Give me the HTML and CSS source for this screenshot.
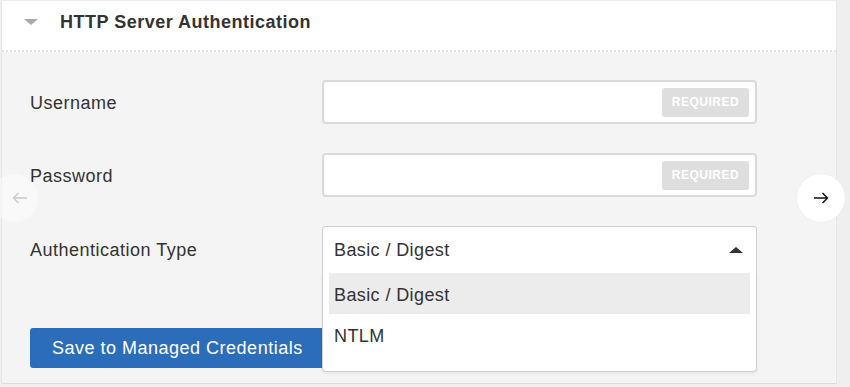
FILE: index.html
```html
<!DOCTYPE html>
<html lang="en">
<head>
    <meta charset="UTF-8">
    <meta name="viewport" content="width=device-width, initial-scale=1.0">
    <title>HTTP Server Authentication</title>
    <link rel="stylesheet" href="styles.css">
</head>
<body>
    <div class="panel">
        <div class="panel-header">
            <span class="toggle"></span>
            <h2>HTTP Server Authentication</h2>
        </div>

        <div class="panel-body">
            <div class="form">
                <label for="username">Username</label>
                <div class="field">
                    <input id="username" type="text">
                    <span class="badge">REQUIRED</span>
                </div>

                <label for="password">Password</label>
                <div class="field">
                    <input id="password" type="password">
                    <span class="badge">REQUIRED</span>
                </div>

                <label>Authentication Type</label>
                <div class="select-wrap">
                    <div class="select">
                        <span>Basic / Digest</span>
                        <span class="caret"></span>
                    </div>
                    <ul class="menu">
                        <li class="active">Basic / Digest</li>
                        <li>NTLM</li>
                    </ul>
                </div>
            </div>

            <div class="actions">
                <button class="btn-primary">Save to Managed Credentials</button>
            </div>
        </div>
    </div>

    <!-- flechas del carrusel -->
    <button class="nav nav-prev">
        <svg width="16" height="12" viewBox="0 0 16 12"><path d="M15 6H1.5M6.5 1L1.5 6l5 5" fill="none" stroke="currentColor" stroke-width="1.3"/></svg>
    </button>
    <button class="nav nav-next">
        <svg width="16" height="12" viewBox="0 0 16 12"><path d="M1 6h13.5M9.5 1l5 5-5 5" fill="none" stroke="currentColor" stroke-width="1.5"/></svg>
    </button>
</body>
</html>
```

FILE: styles.css
```css
body {
    margin: 0;
    background-color: #efefef;
    font-family: "Liberation Sans", Arial, sans-serif;
    color: #333;
    overflow: hidden;
}

.panel {
    width: 834px;
    margin-left: 1px;
    border-left: 1px solid #e6e6e6;
    border-right: 1px solid #e6e6e6;
    border-bottom: 1px solid #dcdcdc;
}

.panel-header {
    display: flex;
    align-items: center;
    height: 52px;
    padding-bottom: 7px;
    background-color: #fff;
    border-top: 1px solid #ececec;
    border-bottom: 2px dotted #e2e2e2;
    box-sizing: border-box;
}

.toggle {
    width: 0;
    height: 0;
    margin-left: 22px;
    border-left: 7px solid transparent;
    border-right: 7px solid transparent;
    border-top: 6px solid #aaa;
}

.panel-header h2 {
    margin: 0 0 0 22px;
    font-size: 18px;
    font-weight: bold;
    letter-spacing: 0.5px;
    color: #333;
}

.panel-body {
    background-color: #f4f4f4;
    padding: 28px 0 15px 28px;
}

.form {
    display: grid;
    grid-template-columns: 292px 435px;
    row-gap: 29px;
    align-items: center;
}

.form label {
    padding-top: 3px;
    font-size: 18px;
    letter-spacing: 0.5px;
}

.field {
    display: flex;
    align-items: center;
    height: 44px;
    padding-right: 6px;
    background-color: #fff;
    border: 2px solid #dadada;
    border-radius: 4px;
    box-sizing: border-box;
}

.field input {
    flex: 1;
    min-width: 0;
    border: none;
    outline: none;
    background: transparent;
    font-size: 16px;
    padding: 0 10px;
}

.badge {
    width: 87px;
    height: 29px;
    line-height: 29px;
    text-align: center;
    background-color: #dedede;
    color: #fff;
    font-size: 12px;
    font-weight: bold;
    letter-spacing: 0.5px;
    border-radius: 3px;
}

.select-wrap {
    position: relative;
    z-index: 2;
}

.select {
    display: flex;
    align-items: center;
    justify-content: space-between;
    height: 46px;
    padding: 2px 13px 0 11px;
    background-color: #fff;
    border: 1px solid #cfcfcf;
    border-bottom: none;
    border-radius: 4px 4px 0 0;
    box-sizing: border-box;
    font-size: 18px;
    letter-spacing: 0.4px;
}

.caret {
    width: 0;
    height: 0;
    margin-top: -2px;
    border-left: 7px solid transparent;
    border-right: 7px solid transparent;
    border-bottom: 6px solid #333;
}

.menu {
    position: absolute;
    top: 100%;
    left: 0;
    right: 0;
    margin: 0;
    padding: 1px 6px 16px 6px;
    list-style: none;
    background-color: #fff;
    border: 1px solid #cfcfcf;
    border-top: none;
    border-radius: 0 0 4px 4px;
    box-shadow: 0 2px 3px rgba(0, 0, 0, 0.06);
}

.menu li {
    height: 41px;
    line-height: 44px;
    padding-left: 5px;
    font-size: 18px;
    letter-spacing: 0.4px;
}

.menu li.active {
    background-color: #ececec;
}

.actions {
    margin-top: 56px;
}

.btn-primary {
    height: 40px;
    padding: 0 22px;
    background-color: #2b6db8;
    color: #fff;
    border: none;
    border-radius: 3px;
    font-family: inherit;
    font-size: 18px;
    letter-spacing: 0.5px;
    cursor: pointer;
}

.nav {
    position: absolute;
    top: 174px;
    width: 48px;
    height: 48px;
    padding: 0;
    border: none;
    border-radius: 50%;
    display: flex;
    align-items: center;
    justify-content: center;
    cursor: pointer;
}

.nav-prev {
    left: -10px;
    background-color: rgba(255, 255, 255, 0.45);
    color: #c8c8c8;
    padding-left: 12px;
}

.nav-next {
    left: 797px;
    background-color: #fff;
    color: #111;
    box-shadow: 0 0 2px rgba(0, 0, 0, 0.06);
}
```
